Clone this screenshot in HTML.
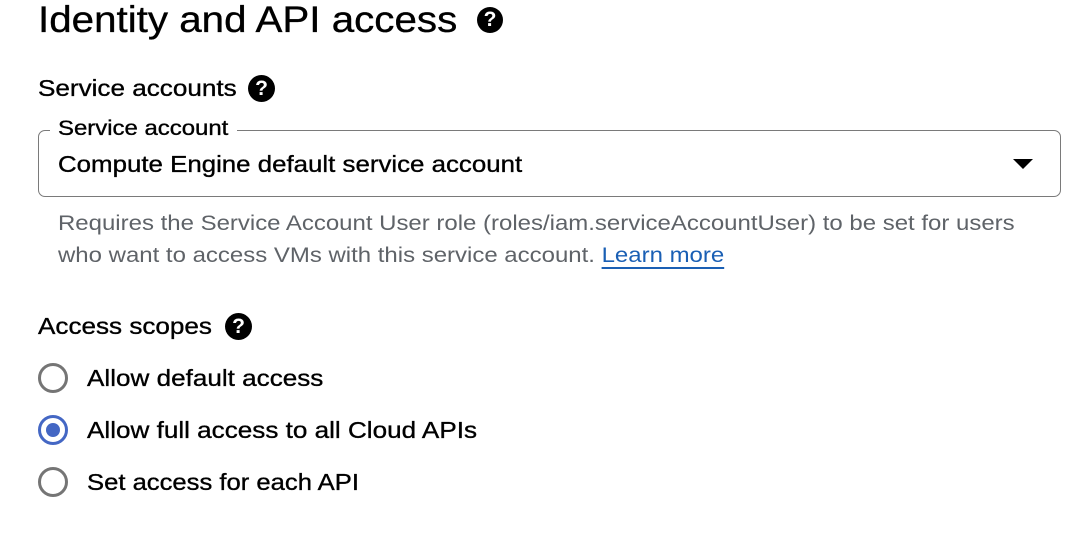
<!DOCTYPE html>
<html><head><meta charset="utf-8"><style>
body{margin:0;width:1082px;height:536px;background:#fff;font-family:"Liberation Sans",Arial,sans-serif;color:#202124;position:relative;overflow:hidden}
.a{position:absolute;white-space:nowrap;transform-origin:0 50%}
.s{-webkit-text-stroke:0.35px currentColor}
.q{position:absolute;border-radius:50%;background:#000;color:#fff;font-weight:bold;text-align:center}
.r{position:absolute;left:38px;width:24px;height:24px;border:3px solid #757575;border-radius:50%}
</style></head><body>
<div class="a s" style="left:38px;top:-2px;font-size:37px;line-height:44px;color:#000;transform:scaleX(1.09)">Identity and API access</div>
<div class="q" style="left:477px;top:7px;width:26px;height:26px;font-size:21px;line-height:26px">?</div>

<div class="a s" style="left:38px;top:74px;font-size:23.5px;line-height:28px;color:#000;transform:scaleX(1.11)">Service accounts</div>
<div class="q" style="left:248px;top:75px;width:27px;height:27px;font-size:21px;line-height:27px">?</div>

<div class="a" style="left:38px;top:130px;width:1021px;height:65px;border:1.5px solid #7a7a7a;border-radius:7px"></div>
<div class="a" style="left:50px;top:116px;width:187px;height:26px;background:#fff"></div>
<div class="a s" style="left:58px;top:116px;font-size:21px;line-height:26px;color:#000;transform:scaleX(1.14)">Service account</div>
<div class="a s" style="left:58px;top:150px;font-size:23.5px;line-height:28px;color:#000;transform:scaleX(1.10)">Compute Engine default service account</div>
<svg class="a" style="left:1012px;top:158px" width="22" height="12"><path d="M1 1H21L11 11Z" fill="#000"/></svg>

<div class="a" style="left:58px;top:207px;font-size:21.5px;line-height:32px;color:#5f6368;transform:scaleX(1.115);transform-origin:0 0">Requires the Service Account User role (roles/iam.serviceAccountUser) to be set for users<br>who want to access VMs with this service account. <span style="color:#1a5fb4;text-decoration:underline;text-underline-offset:5px">Learn more</span></div>

<div class="a s" style="left:38px;top:312px;font-size:23.5px;line-height:28px;color:#000;transform:scaleX(1.11)">Access scopes</div>
<div class="q" style="left:225px;top:313px;width:27px;height:27px;font-size:21px;line-height:27px">?</div>

<div class="r" style="top:363px"></div>
<div class="a s" style="left:87px;top:364px;font-size:23.5px;line-height:28px;color:#000;transform:scaleX(1.11)">Allow default access</div>
<div class="r" style="top:415px;border-color:#4467c4"><div style="position:absolute;left:5px;top:5px;width:14px;height:14px;border-radius:50%;background:#4467c4"></div></div>
<div class="a s" style="left:87px;top:416px;font-size:23.5px;line-height:28px;color:#000;transform:scaleX(1.11)">Allow full access to all Cloud APIs</div>
<div class="r" style="top:467px"></div>
<div class="a s" style="left:87px;top:468px;font-size:23.5px;line-height:28px;color:#000;transform:scaleX(1.09)">Set access for each API</div>
</body></html>
